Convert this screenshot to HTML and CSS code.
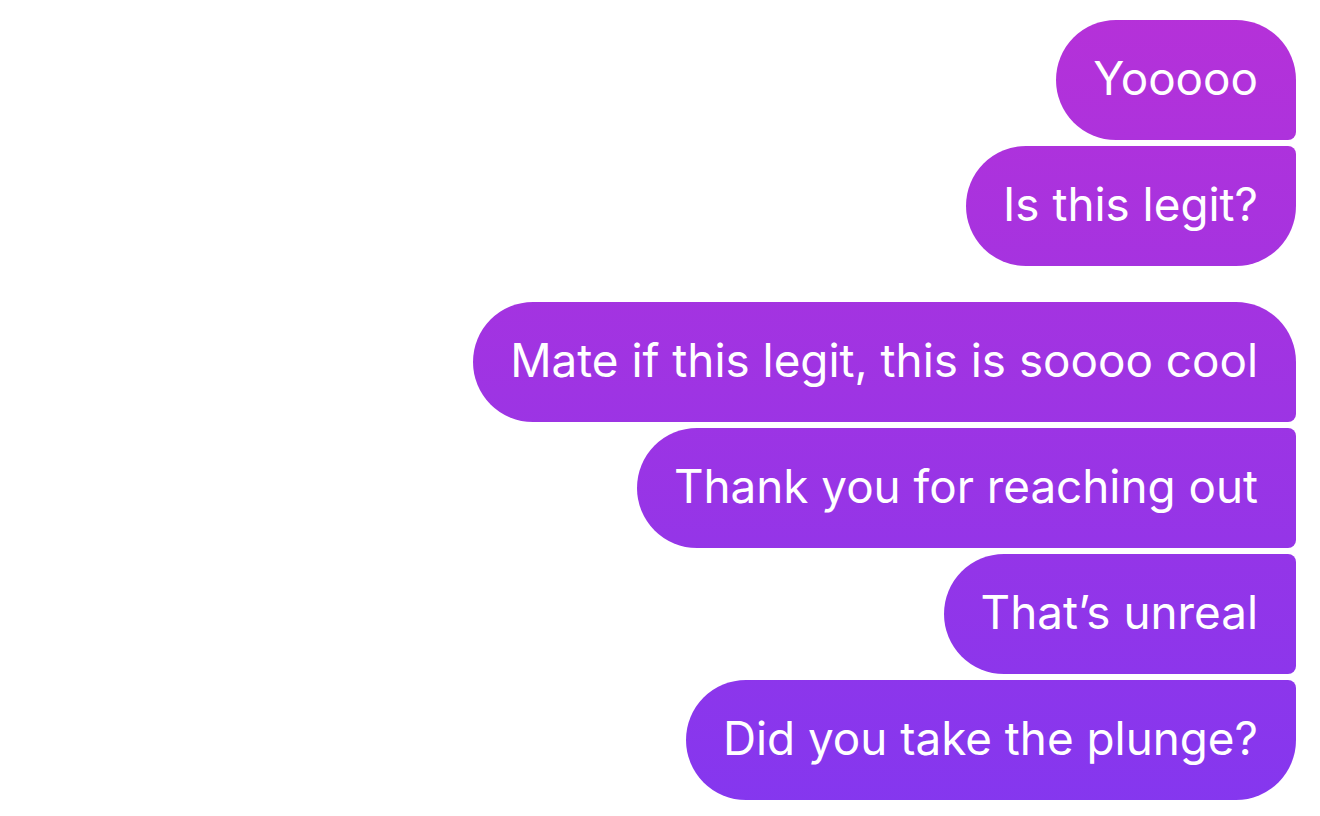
FILE: index.html
```html
<!DOCTYPE html>
<html lang="en">
<head>
    <meta charset="UTF-8">
    <title>Chat</title>
    <link rel="stylesheet" href="styles.css">
</head>
<body>
    <div class="thread">
        <div class="group">
            <div class="bubble first">Yooooo</div>
            <div class="bubble last">Is this legit?</div>
        </div>
        <div class="group">
            <div class="bubble first">Mate if this legit, this is soooo cool</div>
            <div class="bubble">Thank you for reaching out</div>
            <div class="bubble">That’s unreal</div>
            <div class="bubble last">Did you take the plunge?</div>
        </div>
    </div>
</body>
</html>
```
FILE: styles.css
```css
body {
    margin: 0;
    background: #fff;
    font-family: 'Inter', 'Noto Sans', sans-serif;
}

.thread {
    display: flex;
    flex-direction: column;
    align-items: flex-end;
    gap: 36px;
    padding: 20px 24px;
}

.group {
    display: flex;
    flex-direction: column;
    align-items: flex-end;
    gap: 6px;
}

/* bubbles share one gradient pinned to the viewport */
.bubble {
    height: 120px;
    line-height: 118px;
    padding: 0 38px 0 37px;
    font-size: 45.8px;
    color: #fff;
    white-space: nowrap;
    background: linear-gradient(to bottom, #b631d8, #8437ef) fixed;
    border-radius: 60px 8px 8px 60px;
}

.bubble.first {
    border-top-right-radius: 60px;
}

.bubble.last {
    border-bottom-right-radius: 60px;
}
```
